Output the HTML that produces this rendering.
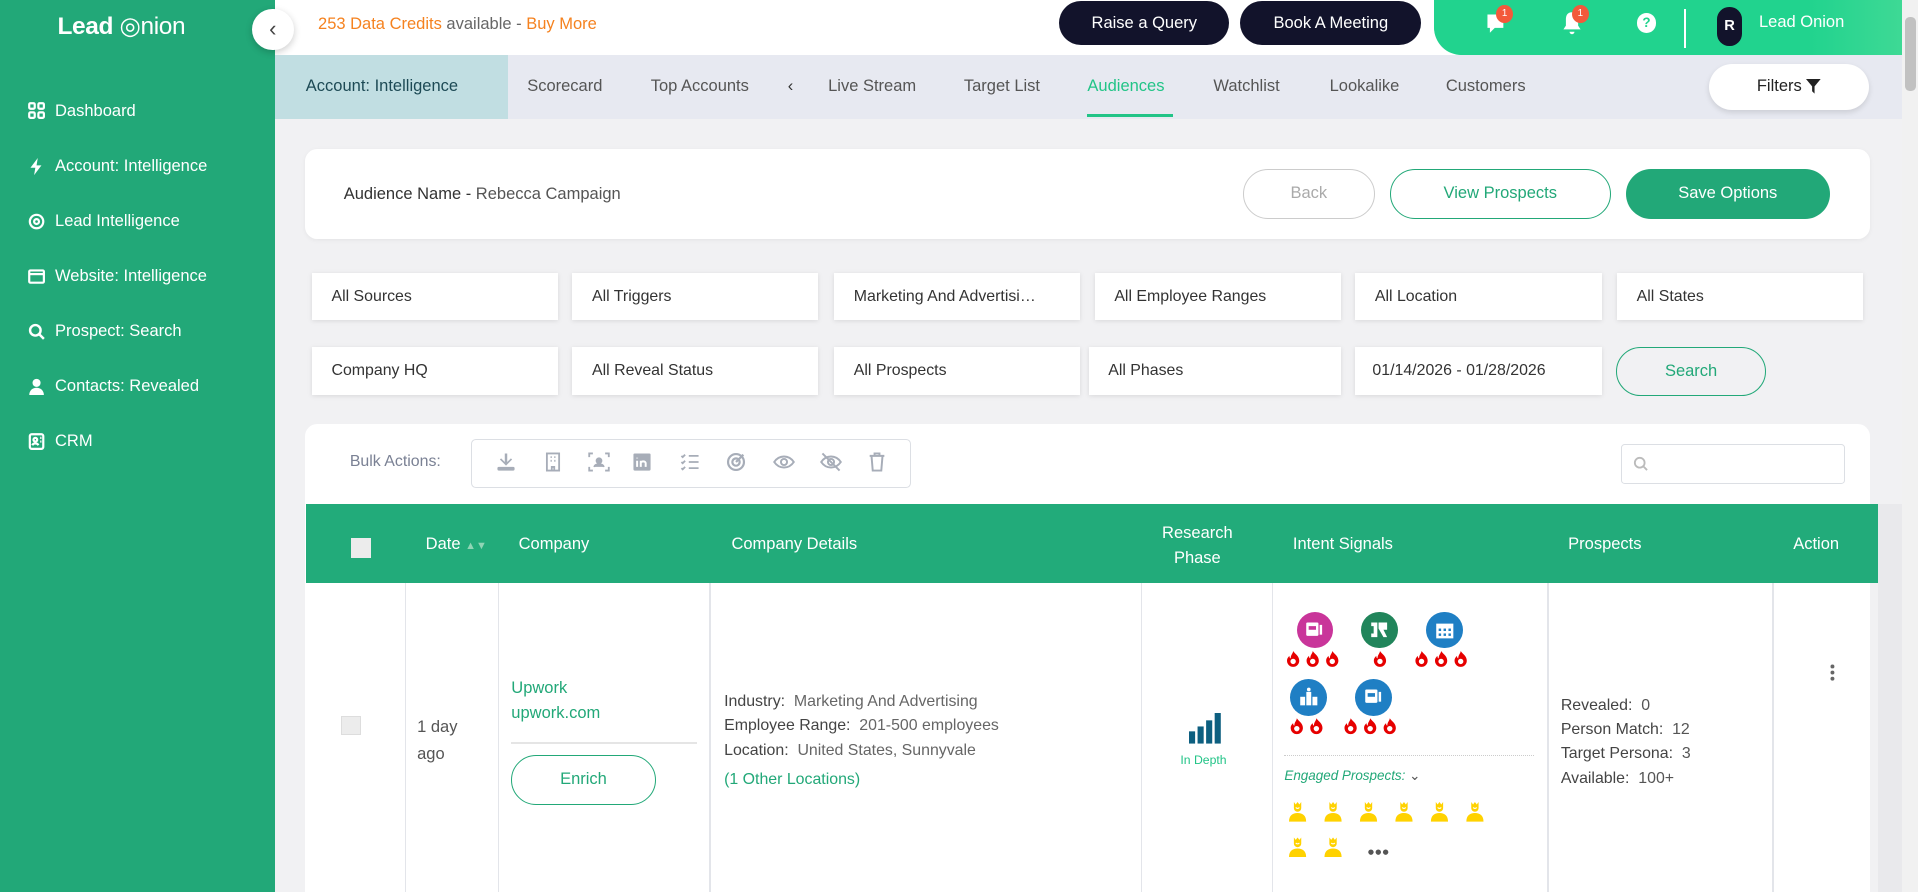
<!DOCTYPE html>
<html><head><meta charset="utf-8"><style>
html,body{margin:0;padding:0;width:1918px;height:892px;overflow:hidden;background:#f0f1f4;}
#w{zoom:1.22321;width:1568px;height:729px;position:relative;font-family:"Liberation Sans",sans-serif;color:#333;overflow:hidden;background:#f1f1f3;}
.a{position:absolute;}
.side{left:0;top:0;width:225px;height:729px;background:#22a878;}
.mi{position:absolute;left:23px;color:#fff;font-size:13.5px;display:flex;align-items:center;gap:8px;}
.mi svg{width:14px;height:14px;}
.top{left:225px;top:0;width:1330px;height:45px;background:#fff;}
.btnd{position:absolute;top:1px;height:36px;border-radius:18px;background:#12132b;color:#fff;font-size:13.5px;display:flex;align-items:center;justify-content:center;}
.tabs{left:225px;top:45px;width:1330px;height:52px;background:#e7e9f1;}
.tab{position:absolute;top:18px;font-size:13.5px;color:#555;}
.box{position:absolute;background:#fff;height:39px;box-shadow:0 1px 4px rgba(0,0,0,.1);font-size:13px;color:#333;display:flex;align-items:center;padding-left:16px;box-sizing:border-box;}
.pill{position:absolute;border-radius:21px;display:flex;align-items:center;justify-content:center;font-size:13.5px;box-sizing:border-box;}
.vl{position:absolute;top:477px;height:252px;width:1px;background:#e3e5ea;}
.th{position:absolute;color:#fff;font-size:13.5px;}
.bi{position:absolute;top:369px;width:18px;height:18px;}
.ci{position:absolute;width:30px;height:30px;border-radius:50%;}
.ci svg{position:absolute;left:7px;top:7px;}
</style></head><body><div id="w">
<svg width="0" height="0" style="position:absolute"><defs>
<g id="fl"><path d="M5 0C7 3 10 4 10 8a5 5 0 01-10 0c0-2 1-3 2-4 0 2 1 2 1 2 0-3 2-4 2-6z" fill="#e60000"/><circle cx="5" cy="8.5" r="2.2" fill="#fff"/></g>
<g id="pp"><path d="M4 0l1.5 2L7 0l1.5 2L10 0v5a3 3 0 01-6 0z" fill="#ffd200"/><path d="M5.5 4.5q1.5 1.5 3 0" stroke="#fff" fill="none" stroke-width=".8"/><path d="M0 16c0-5 3-7 7-7s7 2 7 7z" fill="#ffd200"/></g>
</defs></svg>

<div class="a side">
 <div class="a" style="left:47px;top:9px;color:#fff;font-size:20px;font-weight:bold;letter-spacing:-.3px">Lead <span style="font-weight:normal">◎nion</span></div>
 <div class="mi" style="top:83px"><svg viewBox="0 0 14 14" fill="none" stroke="#fff" stroke-width="1.8"><rect x="1" y="1" width="4.5" height="4.5" rx="1"/><rect x="8.5" y="1" width="4.5" height="4.5" rx="1"/><rect x="1" y="8.5" width="4.5" height="4.5" rx="1"/><rect x="8.5" y="8.5" width="4.5" height="4.5" rx="1"/></svg>Dashboard</div>
 <div class="mi" style="top:128px"><svg viewBox="0 0 14 14"><path d="M8 0L2 8h4l-1 6 6-8H7z" fill="#fff"/></svg>Account: Intelligence</div>
 <div class="mi" style="top:173px"><svg viewBox="0 0 14 14" fill="none" stroke="#fff" stroke-width="1.8"><circle cx="7" cy="7" r="5.5"/><circle cx="7" cy="7" r="2"/></svg>Lead Intelligence</div>
 <div class="mi" style="top:218px"><svg viewBox="0 0 14 14" fill="none" stroke="#fff" stroke-width="1.8"><rect x="1" y="2" width="12" height="10" rx="1"/><path d="M1 5h12"/></svg>Website: Intelligence</div>
 <div class="mi" style="top:263px"><svg viewBox="0 0 14 14" fill="none" stroke="#fff" stroke-width="2"><circle cx="6" cy="6" r="4.3"/><path d="M9 9l4 4"/></svg>Prospect: Search</div>
 <div class="mi" style="top:308px"><svg viewBox="0 0 14 14" fill="#fff"><circle cx="7" cy="4" r="3.3"/><path d="M1 14c0-4 3-6 6-6s6 2 6 6z"/></svg>Contacts: Revealed</div>
 <div class="mi" style="top:353px"><svg viewBox="0 0 14 14" fill="none" stroke="#fff" stroke-width="1.8"><rect x="1.5" y="1" width="11" height="12" rx="1.5"/><circle cx="6" cy="5.5" r="1.5"/><path d="M3.5 10c1-2 4-2 5 0M10 4h1M10 7h1"/></svg>CRM</div>
</div>

<div class="a top">
 <div class="a" style="left:35px;top:12px;font-size:13.5px;color:#f5821f">253 Data Credits <span style="color:#666">available -</span> Buy More</div>
 <div class="btnd" style="left:641px;width:139px">Raise a Query</div>
 <div class="btnd" style="left:789px;width:148px">Book A Meeting</div>
</div>
<div class="a" style="left:1172px;top:0;width:383px;height:45px;background:linear-gradient(90deg,#21d38e 80%,#3ed995);border-radius:0 0 0 24px;"></div>
<div class="a" style="left:1172px;top:0;width:40px;height:45px;background:#21d38e;border-radius:24px 0 0 24px;"></div>
<svg class="a" style="left:1214px;top:10px" width="18" height="20" viewBox="0 0 18 20"><path d="M2 2h13v11H8l-4 4v-4H2z" fill="#fff"/></svg>
<div class="a" style="left:1223px;top:4px;width:14px;height:15px;border-radius:50%;background:#f3593b;color:#fff;font-size:8px;text-align:center;line-height:15px">1</div>
<svg class="a" style="left:1276px;top:9px" width="18" height="20" viewBox="0 0 18 20"><path d="M9 1c4 0 5 3 5 6v5l2 3H2l2-3V7c0-3 1-6 5-6zM7 17h4a2 2 0 01-4 0z" fill="#fff"/></svg>
<div class="a" style="left:1285px;top:4px;width:14px;height:15px;border-radius:50%;background:#f3593b;color:#fff;font-size:8px;text-align:center;line-height:15px">1</div>
<div class="a" style="left:1338px;top:11px;width:16px;height:16px;border-radius:50%;background:#fff;color:#21d38e;font-size:11px;font-weight:bold;text-align:center;line-height:16px">?</div>
<div class="a" style="left:1377px;top:7px;width:1px;height:32px;background:#fff"></div>
<div class="a" style="left:1404px;top:6px;width:20px;height:32px;border-radius:10px;background:#12132b;color:#fff;font-size:12px;font-weight:bold;text-align:center;line-height:32px">R</div>
<div class="a" style="left:1438px;top:11px;color:#fff;font-size:13.5px">Lead Onion</div>

<div class="a" style="left:206px;top:7px;width:34px;height:34px;border-radius:50%;background:#fff;box-shadow:0 2px 6px rgba(0,0,0,.2);text-align:center;line-height:32px;color:#444;font-size:18px">‹</div>

<div class="a tabs">
 <div class="a" style="left:0;top:0;width:190px;height:52px;background:#c1dee2"></div>
 <div class="tab" style="left:25px;color:#1d4a55">Account: Intelligence</div>
 <div class="tab" style="left:206px">Scorecard</div>
 <div class="tab" style="left:307px">Top Accounts</div>
 <div class="tab" style="left:419px;color:#333">‹</div>
 <div class="tab" style="left:452px">Live Stream</div>
 <div class="tab" style="left:563px">Target List</div>
 <div class="tab" style="left:664px;color:#22c487">Audiences</div>
 <div class="a" style="left:664px;top:48px;width:70px;height:3px;background:#22c487"></div>
 <div class="tab" style="left:767px">Watchlist</div>
 <div class="tab" style="left:862px">Lookalike</div>
 <div class="tab" style="left:957px">Customers</div>
 <div class="pill" style="left:1172px;top:7px;width:131px;height:38px;background:#fff;box-shadow:0 2px 5px rgba(0,0,0,.12);color:#222">Filters&nbsp;<svg width="12" height="12" viewBox="0 0 12 12"><path d="M0 0h12L7 6v6L5 10V6z" fill="#222"/></svg></div>
</div>

<div class="a" style="left:1555px;top:0;width:13px;height:729px;background:#f1f1f1"></div>
<div class="a" style="left:1557px;top:14px;width:9px;height:60px;border-radius:4px;background:#c1c1c1"></div>

<div class="a" style="left:249px;top:122px;width:1280px;height:73px;background:#fff;border-radius:10px;box-shadow:0 1px 4px rgba(0,0,0,.05)"></div>
<div class="a" style="left:281px;top:151px;font-size:13.5px;color:#333">Audience Name - <span style="color:#555">Rebecca Campaign</span></div>
<div class="pill" style="left:1016px;top:138px;width:108px;height:41px;border:1px solid #ccc;color:#aaa">Back</div>
<div class="pill" style="left:1136px;top:138px;width:181px;height:41px;border:1px solid #22a878;color:#22a878">View Prospects</div>
<div class="pill" style="left:1329px;top:138px;width:167px;height:41px;background:#22a878;color:#fff">Save Options</div>

<div class="box" style="left:255px;top:223px;width:201px">All Sources</div>
<div class="box" style="left:468px;top:223px;width:201px">All Triggers</div>
<div class="box" style="left:682px;top:223px;width:201px">Marketing And Advertisi…</div>
<div class="box" style="left:895px;top:223px;width:201px">All Employee Ranges</div>
<div class="box" style="left:1108px;top:223px;width:202px">All Location</div>
<div class="box" style="left:1322px;top:223px;width:201px">All States</div>
<div class="box" style="left:255px;top:284px;width:201px">Company HQ</div>
<div class="box" style="left:468px;top:284px;width:201px">All Reveal Status</div>
<div class="box" style="left:682px;top:284px;width:201px">All Prospects</div>
<div class="box" style="left:890px;top:284px;width:206px">All Phases</div>
<div class="box" style="left:1108px;top:284px;width:202px;padding-left:14px">01/14/2026 - 01/28/2026</div>
<div class="pill" style="left:1321px;top:284px;width:123px;height:40px;border:1px solid #22a878;color:#22a878">Search</div>

<div class="a" style="left:249px;top:347px;width:1280px;height:400px;background:#fff;border-radius:10px"></div>
<div class="a" style="left:286px;top:370px;font-size:13px;color:#7a8194">Bulk Actions:</div>
<div class="a" style="left:385px;top:359px;width:360px;height:40px;border:1px solid #dcdfe4;border-radius:4px;box-sizing:border-box"></div>
<svg class="bi" style="left:405px" viewBox="0 0 18 18" fill="#a7adb8"><path d="M8 2h2v7l3-3 1 1-5 5-5-5 1-1 3 3z"/><rect x="2" y="13" width="14" height="3" rx="1"/></svg>
<svg class="bi" style="left:443px" viewBox="0 0 18 18" fill="none" stroke="#a7adb8" stroke-width="1.5"><rect x="4" y="2" width="10" height="14"/><path d="M7 5h1M10 5h1M7 8h1M10 8h1M8 16v-3h2v3"/></svg>
<svg class="bi" style="left:481px" viewBox="0 0 18 18" fill="none" stroke="#a7adb8" stroke-width="1.5"><path d="M1 5V2h3M14 2h3v3M17 13v3h-3M4 16H1v-3"/><circle cx="9" cy="8" r="2" fill="#a7adb8"/><path d="M5 13c1-3 7-3 8 0" fill="#a7adb8"/></svg>
<svg class="bi" style="left:516px" viewBox="0 0 18 18"><rect x="2" y="2" width="14" height="14" rx="1" fill="#a7adb8"/><path d="M5 8v5M5 5.5v.5M8 13V8M8 10c0-2 4-2 4 0v3" stroke="#fff" stroke-width="1.6" fill="none"/></svg>
<svg class="bi" style="left:555px" viewBox="0 0 18 18" fill="none" stroke="#a7adb8" stroke-width="1.5"><path d="M2 4l1 1 2-2M2 9l1 1 2-2M2 14l1 1 2-2M8 4h8M8 9h8M8 14h8"/></svg>
<svg class="bi" style="left:593px" viewBox="0 0 18 18" fill="none" stroke="#a7adb8" stroke-width="1.8"><circle cx="9" cy="9" r="6.5"/><circle cx="9" cy="9" r="3"/><path d="M9 9l6-6"/></svg>
<svg class="bi" style="left:632px" viewBox="0 0 18 18" fill="none" stroke="#a7adb8" stroke-width="1.6"><path d="M1 9c4-6 12-6 16 0c-4 6-12 6-16 0z"/><circle cx="9" cy="9" r="2.5"/></svg>
<svg class="bi" style="left:670px" viewBox="0 0 18 18" fill="none" stroke="#a7adb8" stroke-width="1.6"><path d="M1 9c4-6 12-6 16 0c-4 6-12 6-16 0z"/><circle cx="9" cy="9" r="2.5"/><path d="M2 2l14 14"/></svg>
<svg class="bi" style="left:708px" viewBox="0 0 18 18" fill="none" stroke="#a7adb8" stroke-width="1.6"><path d="M3 4h12M7 4V2h4v2M4.5 4l1 12h7l1-12"/></svg>
<div class="a" style="left:1325px;top:363px;width:183px;height:33px;border:1px solid #dcdfe4;border-radius:3px;box-sizing:border-box"></div>
<svg class="a" style="left:1335px;top:373px" width="13" height="13" viewBox="0 0 13 13" fill="none" stroke="#bbb" stroke-width="1.5"><circle cx="5.5" cy="5.5" r="4"/><path d="M8.5 8.5l3 3"/></svg>

<div class="a" style="left:250px;top:412px;width:1285px;height:65px;background:#22ab7a"></div>
<div class="a" style="left:287px;top:440px;width:16px;height:16px;background:#ececec"></div>
<div class="th" style="left:348px;top:437px">Date <span style="font-size:9px;color:#8fd5b5">▲▼</span></div>
<div class="th" style="left:424px;top:437px">Company</div>
<div class="th" style="left:598px;top:437px">Company Details</div>
<div class="th" style="left:950px;top:426px;text-align:center;line-height:20px">Research<br>Phase</div>
<div class="th" style="left:1057px;top:437px">Intent Signals</div>
<div class="th" style="left:1282px;top:437px">Prospects</div>
<div class="th" style="left:1466px;top:437px">Action</div>

<div class="vl" style="left:331px"></div><div class="vl" style="left:407px"></div><div class="vl" style="left:580px"></div>
<div class="vl" style="left:933px"></div><div class="vl" style="left:1040px"></div><div class="vl" style="left:1265px"></div><div class="vl" style="left:1449px"></div>
<div class="a" style="left:1535px;top:412px;width:20px;height:317px;background:#e9e9ec"></div>

<div class="a" style="left:279px;top:585px;width:16px;height:16px;background:#ececec;border:1px solid #ddd;box-sizing:border-box"></div>
<div class="a" style="left:341px;top:584px;font-size:13.5px;color:#555;line-height:22px">1 day<br>ago</div>
<div class="a" style="left:418px;top:553px;font-size:13.5px;color:#22a878;line-height:20px">Upwork<br>upwork.com</div>
<div class="a" style="left:418px;top:607px;width:152px;height:1px;background:#e5e5e5"></div>
<div class="pill" style="left:418px;top:617px;width:118px;height:41px;border:1px solid #22a878;color:#22a878">Enrich</div>
<div class="a" style="left:592px;top:564px;font-size:13px;color:#666;line-height:20px"><span style="color:#444">Industry:</span>&nbsp; Marketing And Advertising<br><span style="color:#444">Employee Range:</span>&nbsp; 201-500 employees<br><span style="color:#444">Location:</span>&nbsp; United States, Sunnyvale<br><span style="color:#22a878;line-height:28px">(1 Other Locations)</span></div>
<svg class="a" style="left:972px;top:583px" width="28" height="25" viewBox="0 0 28 25" fill="#0d5f80"><rect x="0" y="15" width="5" height="10"/><rect x="7" y="11" width="5" height="14"/><rect x="14" y="6" width="5" height="19"/><rect x="21" y="0" width="5" height="25"/></svg>
<div class="a" style="left:965px;top:616px;font-size:10px;color:#22c487">In Depth</div>

<div class="ci" style="left:1060px;top:500px;background:#c9359a"><svg width="16" height="16" viewBox="0 0 16 16" fill="#fff"><rect x="1" y="2" width="10" height="11" rx="1"/><rect x="12" y="4" width="2" height="8"/><rect x="3" y="5" width="6" height="3" fill="#c9359a"/></svg></div>
<div class="ci" style="left:1113px;top:500px;background:#21855b"><svg width="16" height="16" viewBox="0 0 16 16" fill="#fff"><path d="M1 2h5v12H1v-3h2V5H1zM7 2h7v6h-3l3 6h-3L7 7z"/></svg></div>
<div class="ci" style="left:1166px;top:500px;background:#1f7fc4"><svg width="16" height="16" viewBox="0 0 16 16" fill="#fff"><path d="M1 3h14v12H1z"/><g fill="#1f7fc4"><rect x="3" y="7" width="2" height="2"/><rect x="7" y="7" width="2" height="2"/><rect x="11" y="7" width="2" height="2"/><rect x="3" y="11" width="2" height="2"/><rect x="7" y="11" width="2" height="2"/><rect x="11" y="11" width="2" height="2"/></g></svg></div>
<div class="ci" style="left:1055px;top:555px;background:#1f7fc4"><svg width="16" height="16" viewBox="0 0 16 16" fill="#fff"><rect x="1" y="8" width="4" height="7"/><rect x="6" y="4" width="4" height="11"/><rect x="11" y="8" width="4" height="7"/><circle cx="8" cy="2" r="1.5"/></svg></div>
<div class="ci" style="left:1108px;top:555px;background:#1f7fc4"><svg width="16" height="16" viewBox="0 0 16 16" fill="#fff"><rect x="1" y="2" width="10" height="11" rx="1"/><rect x="12" y="4" width="2" height="8"/><rect x="3" y="5" width="6" height="3" fill="#1f7fc4"/></svg></div>

<svg class="a" style="left:1052px;top:532px" width="160" height="70" viewBox="0 0 160 70">
<use href="#fl" x="0" y="0"/><use href="#fl" x="16" y="0"/><use href="#fl" x="32" y="0"/>
<use href="#fl" x="71" y="0"/>
<use href="#fl" x="105" y="0"/><use href="#fl" x="121" y="0"/><use href="#fl" x="137" y="0"/>
<use href="#fl" x="3" y="55"/><use href="#fl" x="19" y="55"/>
<use href="#fl" x="47" y="55"/><use href="#fl" x="63" y="55"/><use href="#fl" x="79" y="55"/>
</svg>
<div class="a" style="left:1050px;top:617px;width:204px;border-top:1px dotted #ccc"></div>
<div class="a" style="left:1050px;top:628px;font-size:11px;font-style:italic;color:#22a878">Engaged Prospects: <span style="color:#555;font-style:normal">⌄</span></div>
<svg class="a" style="left:1054px;top:656px" width="180" height="50" viewBox="0 0 180 50">
<use href="#pp" x="0" y="0"/><use href="#pp" x="29" y="0"/><use href="#pp" x="58" y="0"/><use href="#pp" x="87" y="0"/><use href="#pp" x="116" y="0"/><use href="#pp" x="145" y="0"/>
<use href="#pp" x="0" y="29"/><use href="#pp" x="29" y="29"/>
<circle cx="67" cy="41" r="2.2" fill="#555"/><circle cx="73" cy="41" r="2.2" fill="#555"/><circle cx="79" cy="41" r="2.2" fill="#555"/>
</svg>

<div class="a" style="left:1276px;top:567px;font-size:13px;color:#555;line-height:20px"><span style="color:#444">Revealed:</span>&nbsp; 0<br><span style="color:#444">Person Match:</span>&nbsp; 12<br><span style="color:#444">Target Persona:</span>&nbsp; 3<br><span style="color:#444">Available:</span>&nbsp; 100+</div>
<svg class="a" style="left:1496px;top:543px" width="4" height="14" viewBox="0 0 4 14" fill="#666"><circle cx="2" cy="2" r="1.6"/><circle cx="2" cy="7" r="1.6"/><circle cx="2" cy="12" r="1.6"/></svg>
</div></body></html>
